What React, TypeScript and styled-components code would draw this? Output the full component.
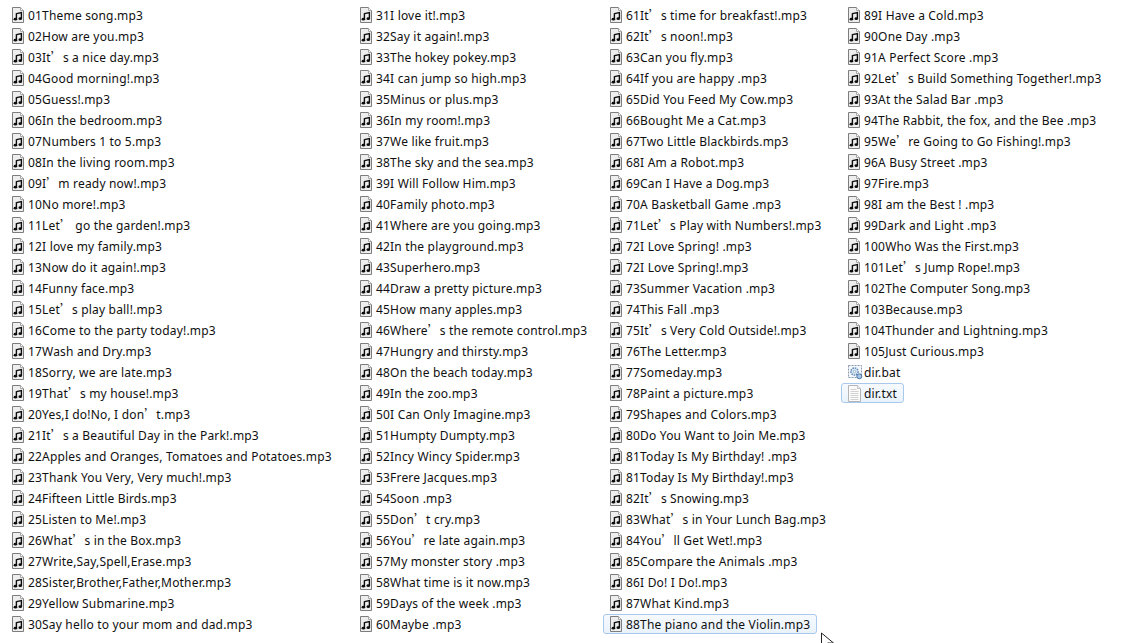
import React from 'react'
import styled, { createGlobalStyle } from 'styled-components'

const columns: { width: number; files: string[] }[] = [
  {
    width: 348,
    files: [
      '01Theme song.mp3', '02How are you.mp3', '03It’s a nice day.mp3', '04Good morning!.mp3', '05Guess!.mp3',
      '06In the bedroom.mp3', '07Numbers 1 to 5.mp3', '08In the living room.mp3', '09I’m ready now!.mp3', '10No more!.mp3',
      '11Let’ go the garden!.mp3', '12I love my family.mp3', '13Now do it again!.mp3', '14Funny face.mp3', '15Let’s play ball!.mp3',
      '16Come to the party today!.mp3', '17Wash and Dry.mp3', '18Sorry, we are late.mp3', '19That’s my house!.mp3', '20Yes,I do!No, I don’t.mp3',
      '21It’s a Beautiful Day in the Park!.mp3', '22Apples and Oranges, Tomatoes and Potatoes.mp3', '23Thank You Very, Very much!.mp3', '24Fifteen Little Birds.mp3', '25Listen to Me!.mp3',
      '26What’s in the Box.mp3', '27Write,Say,Spell,Erase.mp3', '28Sister,Brother,Father,Mother.mp3', '29Yellow Submarine.mp3', '30Say hello to your mom and dad.mp3',
    ],
  },
  {
    width: 250,
    files: [
      '31I love it!.mp3', '32Say it again!.mp3', '33The hokey pokey.mp3', '34I can jump so high.mp3', '35Minus or plus.mp3',
      '36In my room!.mp3', '37We like fruit.mp3', '38The sky and the sea.mp3', '39I Will Follow Him.mp3', '40Family photo.mp3',
      '41Where are you going.mp3', '42In the playground.mp3', '43Superhero.mp3', '44Draw a pretty picture.mp3', '45How many apples.mp3',
      '46Where’s the remote control.mp3', '47Hungry and thirsty.mp3', '48On the beach today.mp3', '49In the zoo.mp3', '50I Can Only Imagine.mp3',
      '51Humpty Dumpty.mp3', '52Incy Wincy Spider.mp3', '53Frere Jacques.mp3', '54Soon .mp3', '55Don’t cry.mp3',
      '56You’re late again.mp3', '57My monster story .mp3', '58What time is it now.mp3', '59Days of the week .mp3', '60Maybe .mp3',
    ],
  },
  {
    width: 238,
    files: [
      '61It’s time for breakfast!.mp3', '62It’s noon!.mp3', '63Can you fly.mp3', '64If you are happy .mp3', '65Did You Feed My Cow.mp3',
      '66Bought Me a Cat.mp3', '67Two Little Blackbirds.mp3', '68I Am a Robot.mp3', '69Can I Have a Dog.mp3', '70A Basketball Game .mp3',
      '71Let’s Play with Numbers!.mp3', '72I Love Spring! .mp3', '72I Love Spring!.mp3', '73Summer Vacation .mp3', '74This Fall .mp3',
      '75It’s Very Cold Outside!.mp3', '76The Letter.mp3', '77Someday.mp3', '78Paint a picture.mp3', '79Shapes and Colors.mp3',
      '80Do You Want to Join Me.mp3', '81Today Is My Birthday! .mp3', '81Today Is My Birthday!.mp3', '82It’s Snowing.mp3', '83What’s in Your Lunch Bag.mp3',
      '84You’ll Get Wet!.mp3', '85Compare the Animals .mp3', '86I Do! I Do!.mp3', '87What Kind.mp3', '88The piano and the Violin.mp3',
    ],
  },
  {
    width: 280,
    files: [
      '89I Have a Cold.mp3', '90One Day .mp3', '91A Perfect Score .mp3', '92Let’s Build Something Together!.mp3', '93At the Salad Bar .mp3',
      '94The Rabbit, the fox, and the Bee .mp3', '95We’re Going to Go Fishing!.mp3', '96A Busy Street .mp3', '97Fire.mp3', '98I am the Best ! .mp3',
      '99Dark and Light .mp3', '100Who Was the First.mp3', '101Let’s Jump Rope!.mp3', '102The Computer Song.mp3', '103Because.mp3',
      '104Thunder and Lightning.mp3', '105Just Curious.mp3', 'dir.bat', 'dir.txt',
    ],
  },
]

const SELECTED = ['88The piano and the Violin.mp3', 'dir.txt']

const GlobalStyle = createGlobalStyle`
  html, body {
    margin: 0;
    background: #ffffff;
    overflow: hidden;
  }
`

const Page = styled.div`
  position: relative;
  display: flex;
  width: 1131px;
  height: 643px;
  box-sizing: border-box;
  padding: 5px 0 0 5px;
  overflow: hidden;
  font-family: 'Noto Sans', Tahoma, sans-serif;
  font-size: 12px;
  letter-spacing: 0.18px;
  color: #101010;
`

const Column = styled.ul<{ $width: number }>`
  display: flex;
  flex-direction: column;
  align-items: flex-start;
  gap: 1px;
  width: ${(p) => p.$width}px;
  flex: none;
  margin: 0;
  padding: 0;
  list-style: none;
`

const Item = styled.li<{ $selected: boolean }>`
  display: flex;
  align-items: center;
  height: 20px;
  box-sizing: border-box;
  padding: 0 6px;
  border: 1px solid ${(p) => (p.$selected ? '#a9c9ec' : 'transparent')};
  border-radius: 3px;
  background: ${(p) => (p.$selected ? 'linear-gradient(#f6fafe, #e9f2fc)' : 'transparent')};
  white-space: pre;
`

const IconSlot = styled.span`
  display: flex;
  width: 16px;
  height: 18px;
  flex: none;
  align-items: center;
`

const WideQuote = styled.span`
  font-family: 'Noto Sans CJK SC', sans-serif;
  letter-spacing: 0;
  line-height: 1;
`

const Pointer = styled.svg`
  position: absolute;
  left: 820px;
  top: 632px;
`

function MusicIcon() {
  return (
    <svg width="12" height="16" viewBox="0 0 12 16">
      <path d="M.5.5h8l3 3v12H.5z" fill="#eeeeee" stroke="#7d7d7d" />
      <path d="M8.5.5v3h3" fill="#fff" stroke="#a8a8a8" />
      <path d="M4.4 6.6l5-1v6" fill="none" stroke="#0c0c0c" strokeWidth="1.4" />
      <path d="M4.4 6.2v5.8" fill="none" stroke="#0c0c0c" strokeWidth="1.4" />
      <ellipse cx="3.4" cy="12.2" rx="1.8" ry="1.4" fill="#0c0c0c" />
      <ellipse cx="8.3" cy="11.7" rx="1.8" ry="1.4" fill="#0c0c0c" />
    </svg>
  )
}

function BatIcon() {
  return (
    <svg width="15" height="15" viewBox="0 0 15 15">
      <rect x=".5" y=".5" width="13" height="12" fill="#f4f8fc" stroke="#8a9bb0" strokeDasharray="2 1" />
      <circle cx="6.5" cy="6.5" r="3.6" fill="#dbe8f5" stroke="#5c85b5" strokeWidth="1.4" strokeDasharray="1.6 .8" />
      <circle cx="6.5" cy="6.5" r="1.2" fill="#fff" stroke="#6f8fb5" strokeWidth=".6" />
      <circle cx="11.3" cy="11.3" r="2.5" fill="#a9c4e2" stroke="#3f6ea6" strokeWidth=".9" />
    </svg>
  )
}

function TextIcon() {
  return (
    <svg width="13" height="17" viewBox="0 0 13 17">
      <path d="M.5.5h9l3 3v13H.5z" fill="#fbfbfb" stroke="#b4b4b4" />
      <path d="M9.5.5v3h3" fill="#efefef" stroke="#c4c4c4" />
      <path d="M2.5 4.5h6M2.5 6.5h8M2.5 8.5h8M2.5 10.5h8M2.5 12.5h8M2.5 14.5h8" stroke="#d2d2d2" />
    </svg>
  )
}

function FileIcon({ name }: { name: string }) {
  if (name.endsWith('.bat')) return <BatIcon />
  if (name.endsWith('.txt')) return <TextIcon />
  return <MusicIcon />
}

function FileName({ name }: { name: string }) {
  const parts = name.split('’')
  return (
    <span>
      {parts.map((part, i) => (
        <React.Fragment key={i}>
          {i > 0 && <WideQuote>’</WideQuote>}
          {part}
        </React.Fragment>
      ))}
    </span>
  )
}

export default function App() {
  return (
    <>
      <GlobalStyle />
      <Page>
        {columns.map((col) => (
          <Column key={col.files[0]} $width={col.width}>
            {col.files.map((file, i) => (
              <Item key={file + i} $selected={SELECTED.includes(file)}>
                <IconSlot>
                  <FileIcon name={file} />
                </IconSlot>
                <FileName name={file} />
              </Item>
            ))}
          </Column>
        ))}
        <Pointer width="15" height="11" viewBox="0 0 15 11">
          <path d="M1.5 1v15l4-4 3 6 2-1-3-6h6z" fill="#fff" stroke="#222" />
        </Pointer>
      </Page>
    </>
  )
}
